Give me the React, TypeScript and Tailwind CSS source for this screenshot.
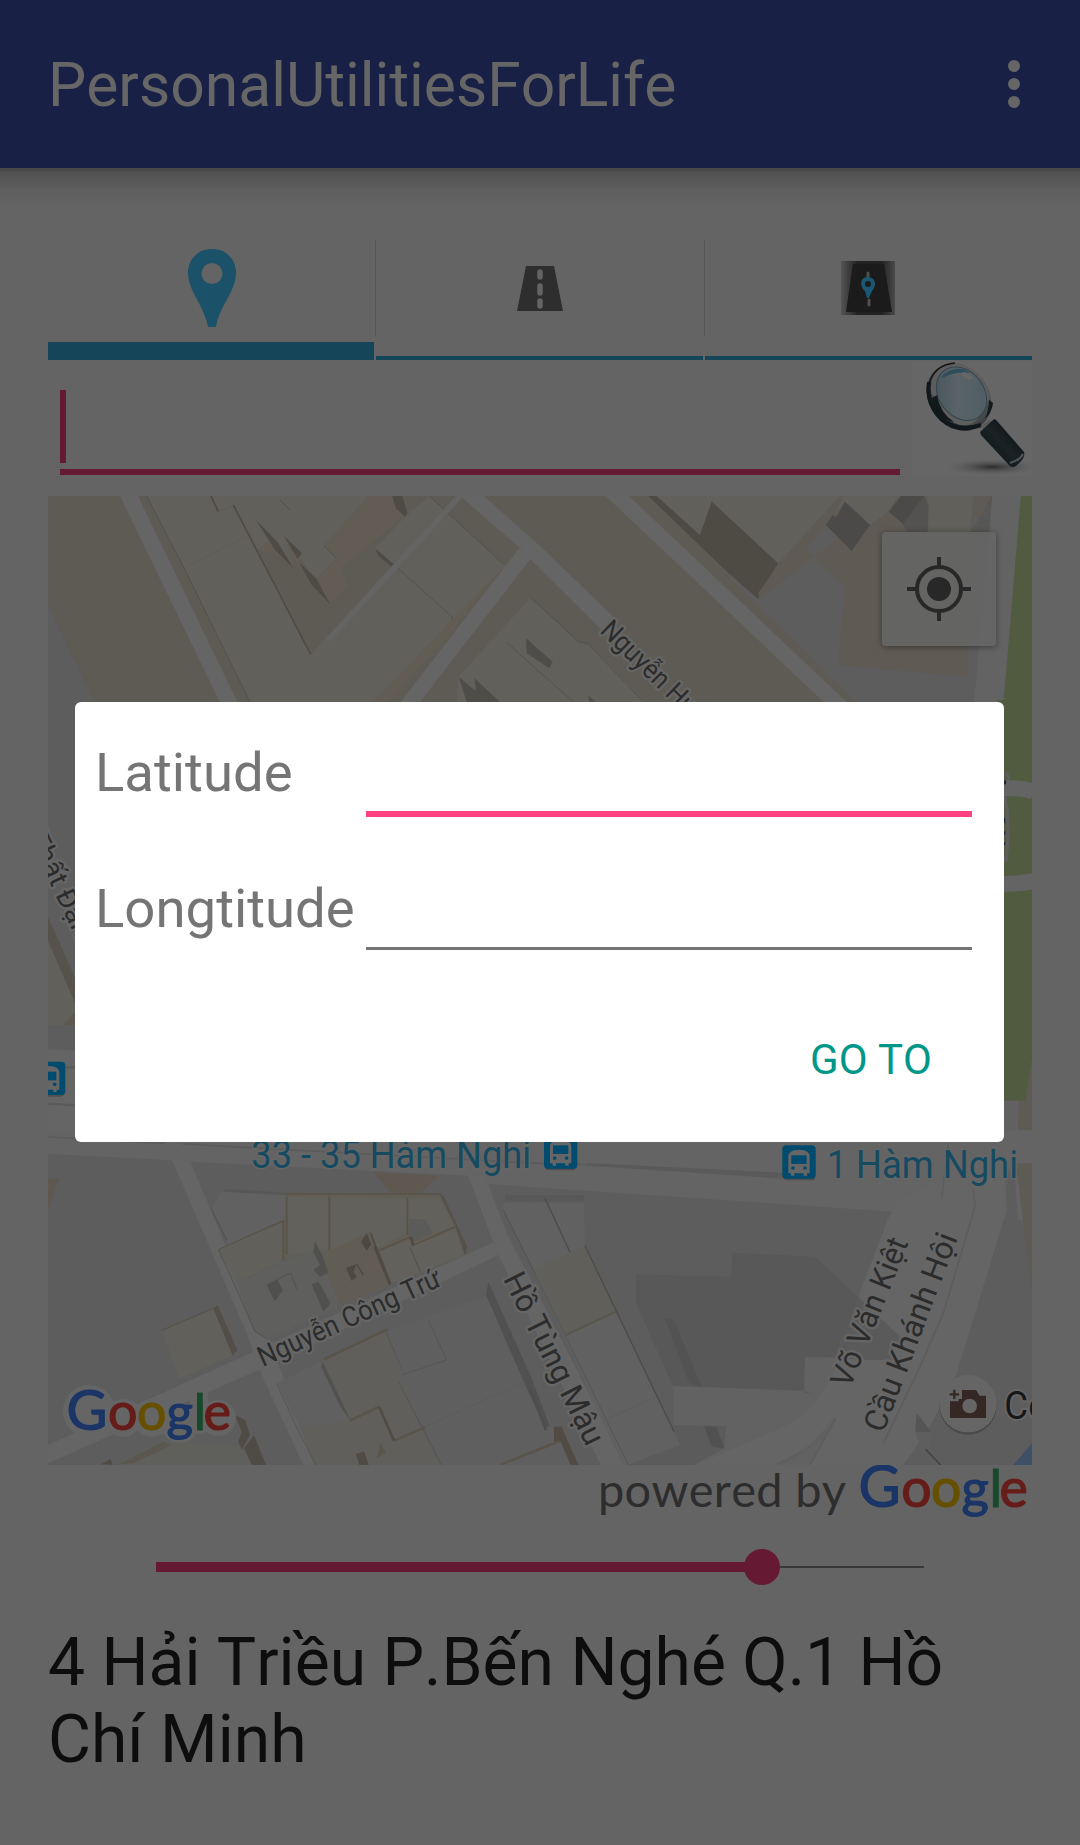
import React from "react";

const ROAD = "#656565";
const ROBOTO = "Roboto, sans-serif";

function Poly({ p, f }: { p: string; f: string }) {
  return <polygon points={p} fill={f} />;
}

function Label({ x, y, a, len, size, children, fill = "#2c2c2c" }: { x: number; y: number; a: number; len: number; size: number; children: string; fill?: string }) {
  return (
    <text transform={`translate(${x} ${y}) rotate(${a})`} fontFamily={ROBOTO} fontSize={size} textLength={len} lengthAdjust="spacingAndGlyphs" fill={fill} stroke="#666666" strokeWidth="14" strokeLinejoin="round" paintOrder="stroke">
      {children}
    </text>
  );
}

function Bus({ x, y }: { x: number; y: number }) {
  return (
    <g transform={`translate(${x} ${y})`}>
      <rect x="1" y="5" width="98" height="100" rx="14" fill="#505050" />
      <rect width="100" height="100" rx="12" fill="#004b6e" />
      <path d="M18 84V34Q18 13 50 13Q82 13 82 34V84H74V91H64V84H36V91H26V84Z" fill="#666" />
      <rect x="27" y="30" width="46" height="26" fill="#004b6e" />
      <circle cx="32" cy="68" r="5.5" fill="#004b6e" />
      <circle cx="68" cy="68" r="5.5" fill="#004b6e" />
    </g>
  );
}

function GoogleMark({ halo }: { halo?: boolean }) {
  const letters: [string, number, string, number][] = [
    ["G", -2.5, "#1a3566", 56],
    ["o", 39, "#661c18", 52],
    ["o", 68, "#665000", 52],
    ["g", 97.5, "#1a3566", 51],
    ["l", 125, "#17492a", 50],
    ["e", 134.5, "#661c18", 52],
  ];
  return (
    <svg width={halo ? 164 : 169} height={halo ? 58 : 59.8} viewBox="0 0 164 58" className="block overflow-visible" fontFamily="Lato, sans-serif">
      {halo && (
        <g fill="#656565">
          <circle cx="20" cy="22" r="26" />
          <circle cx="54" cy="29" r="19" />
          <circle cx="83" cy="29" r="19" />
          <circle cx="111" cy="35" r="19" />
          <rect x="121" y="-1" width="18" height="46" rx="7" />
          <circle cx="149" cy="29" r="18" />
        </g>
      )}
      <text y="41" strokeWidth="1.2">
        {letters.map(([c, x, color, size], i) => (
          <tspan key={i} x={x} fontSize={size} fill={color} stroke={color}>{c}</tspan>
        ))}
      </text>
    </svg>
  );
}

function CityMap() {
  return (
    <svg width="984" height="969" viewBox="48 496 984 969" className="block">
      <rect x="48" y="496" width="984" height="969" fill="#5d5d5d" />

      {/* north-west blocks */}
      <g transform="translate(40 490) scale(.33333)">
        <Poly p="24,18 3000,18 3000,660 175,660 24,345" f="#5e5b55" />
        <Poly p="320,18 1170,18 1390,222 1240,385 1000,635 630,635 430,230" f="#61605b" />
        <Poly p="985,18 1165,18 1390,222 925,635 1000,635 1400,225 1390,222 1160,18" f="#61605b" />
        <Poly p="985,18 1160,18 812,494 655,180 690,150 765,235 740,140 870,340 830,265 890,205 852,168" f="#5e5b55" />
        <Poly p="985,18 1058,18 1095,80 905,230 925,285 870,340 830,265 890,205 852,168" f="#625c54" />
        <Poly p="655,180 690,150 760,235 735,140 775,205 870,340 775,215" f="#625c54" />
        <Poly p="655,180 760,236 775,215 870,340 925,285 905,235 1095,80 1060,222 812,494" f="#5e5b55" />
        <Poly p="1160,18 1255,18 1215,60 865,450 812,494 1095,80" f="#5e5b55" />
        <Poly p="1095,80 1168,18 1390,222 1240,385 1000,635 660,635 812,494 1060,222 1005,176" f="#61605b" />
        <Poly p="648,90 712,155 762,236 705,180" f="#4e4b45" />
        <Poly p="732,138 786,190 772,206" f="#4e4b45" />
        <Poly p="777,216 828,265 870,342 815,285" f="#4e4b45" />
        <Poly p="1056,18 1087,18 1102,70 1095,80 1068,55" f="#4e4b45" />
        <Poly p="1005,174 1060,222 1054,230 1015,197" f="#4e4b45" />
        <Poly p="510,18 516,18 537,64 532,66" f="#514a42" />
        <path d="M580 45L812 493" stroke="#514a42" strokeWidth="5" />
        <path d="M320 18L430 230L630 635M1168 18L1390 222M1060 222L1235 380L1241 405M718 28L750 60M852 168L890 206" fill="none" stroke="#4c4b46" strokeWidth="2" />
        <path d="M440 230L620 138M535 66L580 45" stroke="#5c5a54" strokeWidth="2" />
        <path d="M1265 12L865 450" stroke="#646463" strokeWidth="17" />
        <Poly p="1390,232 1240,385 1000,635 1040,635 1220,445" f="#625c54" />
        <Poly p="240,18 294,18 592,635 650,755 605,755 539,635" f={ROAD} />
      </g>
      {/* north-east blocks */}
      <g transform="translate(540 490) scale(.33333)">
        <Poly p="1170,18 1262,18 1434,172 1400,225 1390,222" f="#5e5b55" />
        <Poly p="-245,420 -10,120 320,660 -320,660" f="#5e5b55" />
        <Poly p="-28,323 0,348 115,455 145,462 195,510 330,650 -250,650 -245,560" f="#61605b" />
        <path d="M-28 323L0 348L115 455L145 462L195 515L310 635M-100 457L0 547L100 635" fill="none" stroke="#4c4b46" strokeWidth="2" />
        <Poly p="-42,445 38,515 28,535 -40,490" f="#4e4d49" />
        <Poly p="-244,560 -185,610 -185,660 -220,635" f="#4e4d49" />
        <Poly p="-197,565 -110,645 -185,660" f="#4e4d49" />
        <Poly p="145,618 168,635 148,635" f="#4e4d49" />
        <Poly p="350,18 900,18 915,35 715,222 515,35 480,136" f="#61605b" />
        <Poly p="325,18 350,18 480,136 515,35 714,220 654,327 545,230" f="#4d4b44" />
        <Poly p="900,18 1445,18 1410,640 950,640 535,230 654,327 715,222" f="#5d5d5d" />
        <Poly p="900,18 1080,18 885,80 795,175 915,290 895,525 1280,560 1300,18 1355,18 1355,35 1325,75 1180,95 1160,18 1060,18 660,325 654,310 715,222" f="#5f5a53" />
        <Poly p="912,18 1075,18 1045,65 990,105 915,35 880,80" f="#61605b" />
        <Poly p="1165,18 1300,18 1290,130 1165,130" f="#61605b" />
        <Poly p="915,35 990,105 935,183 858,105 878,75 888,82" f="#4b4a48" />
        <Poly p="1083,18 1153,18 1090,103 1047,65" f="#4b4a48" />
        <Poly p="1153,18 1166,50 1162,130 1100,125 1088,103" f="#535250" />
        <Poly p="1355,20 1380,18 1345,130 1290,130" f="#575756" />
        <Poly p="1357,18 1443,18 1390,640 1302,640" f="#636363" />
        <Poly p="197,18 267,18 920,636 1100,806 1020,806 851,636" f={ROAD} />
        <Poly p="-240,18 -168,18 0,168 215,375 260,480 200,435 0,237 -60,175" f={ROAD} />
        <Poly p="-418,636 -62,174 -28,206 -360,636" f={ROAD} />
        <Poly p="1443,18 1476,18 1476,650 1390,650" f="#505b40" />
        <Label x={177} y={425} a={44} len={405} size={83}>Nguyễn Huệ</Label>
      </g>
      {/* west edge */}
      <g transform="translate(40 700) scale(.33333)">
        <Poly p="24,650 110,860 110,975 24,975" f="#61605b" />
        <Poly p="24,650 110,845 110,920 24,723" f="#57524b" />
        <Poly p="70,975 110,930 110,975" f="#5e584e" />
        <Poly p="24,1048 110,1052 3000,1090 3000,1500 24,1365" f={ROAD} />
        <path d="M24 1102H110M24 1211L110 1216M24 1312L375 1330" stroke="#5a5a5a" strokeWidth="7" />
        <Label x={-36} y={408} a={65} len={370} size={82}>Thất Đạm</Label>
        <Bus x={-24} y={1085} />
      </g>
      {/* park on the east edge */}
      <g transform="translate(900 700) scale(.33333)">
        <Poly p="290,0 396,0 396,1080 378,1202 290,1202" f="#505b40" />
        <path d="M300 264Q360 262 400 274M300 552Q360 552 400 543" fill="none" stroke="#646464" strokeWidth="48" />
        <path d="M315 220Q326 225 326 240M315 290Q332 380 317 485" fill="none" stroke="#5d5d5d" strokeWidth="10" />
        <circle cx="312" cy="247" r="7" fill="#202a2d" />
        <path d="M313 355V370M313 394V404M313 426V435" stroke="#202a2d" strokeWidth="5" />
        <Poly p="290,1202 356,1202 352,1350 290,1350" f="#616161" />
        <Poly p="378,1202 396,1080 396,1460 350,1460 356,1202" f="#5e5b55" />
      </g>
      {/* southern blocks */}
      <g transform="translate(40 1130) scale(.33333)">
        <Poly p="24,0 3000,0 3000,275 24,72" f="#646464" />
        <path d="M24 21L375 40M428 42L1500 100L1700 105L2300 145" fill="none" stroke="#5b5b5b" strokeWidth="5" />
        <Poly p="1640,99 2325,133 2325,152 1640,107" f="#5a5a5a" />
        <Poly p="24,72 398,91 640,620 640,660 24,945" f="#5d5d5d" />
        <Poly p="450,95 1285,137 1355,332 685,635" f="#5d5d5d" />
        <Poly p="395,88 450,92 600,450 705,680 845,1010 792,1010 665,735 620,610" f={ROAD} />
        <Poly p="24,945 640,665 1375,330 1375,375 700,700 24,1000" f={ROAD} />
        <Poly p="1283,135 1335,137 1400,310 1760,1010 1685,1010 1375,375" f={ROAD} />
        <Poly p="24,145 57,145 24,240" f="#5e5850" />
        <Poly p="998,126 1195,138 1138,192 1055,190" f="#5e5850" />
        <Poly p="545,183 740,190 740,380 590,460 560,330 515,238" f="#616161" />
        <path d="M550 181L740 192" stroke="#575757" strokeWidth="8" />
        <Poly p="740,188 1205,195 1245,285 1280,365 1145,428 865,525 830,350 724,395" f="#625e56" />
        <Poly p="740,201 864,201 864,360 740,375" f="#62615b" />
        <Poly p="873,201 1102,205 1102,310 1010,355 990,305 873,357" f="#62615b" />
        <Poly p="1105,205 1200,205 1242,290 1178,310 1155,268 1105,268" f="#62615b" />
        <Poly p="1110,268 1155,270 1178,310 1120,335 1105,310" f="#5b5b5a" />
        <Poly p="1200,195 1210,198 1282,350 1275,376 1245,285" f="#55504a" />
        <path d="M740 192H1205M740 200V375M868 200V360M1102 205V315M690 290L730 272V390M535 360L700 285M1112 350L1245 290M1015 362L1112 320" fill="none" stroke="#595347" strokeWidth="5" />
        <Poly p="535,360 690,292 724,292 724,395 590,458" f="#61605b" />
        <Poly p="590,460 830,350 900,525 865,545 680,625 640,600" f="#5f5f5d" />
        <Poly p="840,378 990,310 1050,465 900,526" f="#615d54" />
        <Poly p="1018,365 1108,330 1140,425 1055,460" f="#62615b" />
        <Poly p="1110,352 1245,296 1272,375 1145,425" f="#62615b" />
        <Poly p="680,465 712,447 728,482 704,514" f="#50504f" />
        <path d="M712 447L752 430L772 482" fill="none" stroke="#555" strokeWidth="4" />
        <Poly p="825,335 848,378 865,430 840,440 820,420 840,405 820,365" f="#50504f" />
        <Poly p="815,462 835,455 872,520 850,545" f="#50504f" />
        <Poly p="918,413 950,402 940,425 950,440 935,453" f="#4d4841" />
        <Poly p="963,335 980,310 994,342 980,363" f="#4d4841" />
        <path d="M950 402L970 435M992 308L1050 465" stroke="#4d4841" strokeWidth="4" />
        <path d="M1005 350L1050 462" stroke="#504a42" strokeWidth="10" />
        <path d="M1112 320L1120 345" stroke="#504a42" strokeWidth="9" />
        <path d="M515 238L560 330M535 360L582 460L645 605L680 625M1110 352L1140 425" fill="none" stroke="#484848" strokeWidth="2" />
        <Poly p="365,600 520,535 578,675 418,747" f="#61605b" />
        <Poly p="520,535 533,526 592,660 578,677" f="#534e48" />
        <path d="M365 601L520 535" stroke="#5a544b" strokeWidth="4" />
        <Poly p="710,760 850,690 930,875 780,892" f="#606060" />
        <Poly p="850,690 1040,600 1140,890 1205,1010 825,1010 780,892 930,872" f="#605f5b" />
        <Poly p="1040,605 1340,495 1470,750 1600,1010 1205,1010 1080,755" f="#5f5f5f" />
        <Poly p="1345,455 1475,745 1530,890 1515,890 1460,775 1338,495" f="#515151" />
        <Poly p="848,695 932,872 900,828 843,710" f="#515151" />
        <path d="M852 688L1042 598M930 872L1018 830M1062 932L1155 892M1380 1005L1540 940" stroke="#5a544a" strokeWidth="7" />
        <path d="M1018 832L1062 932" stroke="#514b43" strokeWidth="8" />
        <path d="M1165 570L1220 690L1085 735M1038 605L1087 720M1075 755L1205 1005M710 762L770 892L828 1005" fill="none" stroke="#505050" strokeWidth="2" />
        <path d="M1155 890L1455 755" stroke="#5a5a5a" strokeWidth="2" />
        <Poly p="947,972 972,965 988,1010 960,1010" f="#514b43" />
        <Poly p="1022,938 1037,970 1010,985" f="#5a544a" />
        <Poly p="240,1005 390,935 600,945 640,1010 240,1010" f="#5f5f5b" />
        <Poly p="240,1003 370,935 395,945 280,1000" f="#5c574e" />
        <Poly p="585,855 615,870 630,915 605,960 595,935 605,905" f="#504c45" />
        <Poly p="642,915 680,1010 638,1010 612,955" f="#504b45" />
        <Poly p="182,1003 212,988 218,1005" f="#504b45" />
        <text x="634" y="113" fontFamily={ROBOTO} fontSize="118" textLength="839" lengthAdjust="spacingAndGlyphs" fill="#164a60" stroke="#666" strokeWidth="9" paintOrder="stroke">33 - 35 Hàm Nghi</text>
      </g>
      <g transform="translate(530 1130) scale(.33333)">
        <Poly p="-80,218 162,220 165,345 260,545 450,945 340,1010 280,1010 120,660 0,400 -80,240" f="#616161" />
        <path d="M-75 205H162" stroke="#585858" strokeWidth="18" />
        <Poly p="15,415 165,348 258,545 107,615" f="#605f5a" />
        <path d="M45 205L120 367M165 347L260 545L432 905" fill="none" stroke="#4b4b4a" strokeWidth="4" />
        <path d="M-80 240L10 420L295 1005" fill="none" stroke="#4f4f4e" strokeWidth="2" />
        <path d="M107 615L258 545" stroke="#5b564c" strokeWidth="6" />
        <path d="M228 868L380 800" stroke="#5b5b5b" strokeWidth="2" />
        <Poly p="318,433 603,441 607,368 855,380 1110,620 1170,690 825,681 822,782 430,770 318,520" f="#585858" />
        <Poly p="403,562 432,570 515,770 478,760" f="#535353" />
        <Poly p="430,768 822,782 825,681 1170,690 1160,900 850,1010 495,1010 430,885" f="#626262" />
        <Poly p="430,885 588,888 583,955 500,1000 490,1010 280,1010 450,945" f="#5b5b5b" />
        <Poly p="522,888 560,892 583,955 545,950" f="#515151" />
        <path d="M1120 205Q1080 240 1065 290L985 500L900 740Q850 850 750 895L495 1005H735L840 945L910 865L1120 900L1310 500L1335 170L1240 150Z" fill={ROAD} />
        <Poly p="985,500 1110,620 1090,690 1020,690 825,681 822,790 868,790" f="#5a5a5a" />
        <Poly p="825,681 930,684 868,800 822,782" f="#626262" />
        <Poly p="1240,100 1425,100 1430,240 1280,740 1190,905 1120,1005 840,1010 920,865 1170,640 1320,300" f={ROAD} />
        <Poly p="1425,100 1455,140 1465,300 1506,520 1506,1010 1150,1010 1228,840 1280,730 1430,245" f="#5d5d5d" />
        <Poly p="1458,100 1506,100 1506,490" f="#5e5b55" />
        <path d="M1330 175L1335 230L1240 550L1170 710L1060 940M1235 205L1255 40M918 862L840 1005" fill="none" stroke="#5d5d5d" strokeWidth="5" />
        <path d="M735 1005Q840 965 890 900" fill="none" stroke="#5f5f5f" strokeWidth="4" />
        <Poly p="1160,850 1207,908 1155,905" f="#555" />
        <Poly p="1155,907 1207,907 1200,960 1172,980 1172,950" f="#5e5e5e" />
        <path d="M1187 958L1232 1005" stroke="#444" strokeWidth="5" />
        <Poly p="1450,1005 1506,940 1506,1005" f="#3f4f66" />
        <Poly p="72,890 95,890 145,1005 122,1005 92,935 72,935" f="#514b43" />
        <path d="M0 970L90 933" stroke="#5a544a" strokeWidth="7" />
        <path d="M0 775L48 900" stroke="#4e4e4e" strokeWidth="8" />
        <Bus x={42} y={16} />
        <Bus x={757} y={46} />
        <text x="890" y="143" fontFamily={ROBOTO} fontSize="119" textLength="574" lengthAdjust="spacingAndGlyphs" fill="#164a60" stroke="#666" strokeWidth="9" paintOrder="stroke">1 Hàm Nghi</text>
        <Label x={-82} y={446} a={63.5} len={566} size={94}>Hồ Tùng Mậu</Label>
        <Label x={960} y={778} a={-68.2} len={474} size={95}>Võ Văn Kiệt</Label>
        <Label x={1060} y={912} a={-69.2} len={630} size={95}>Cầu Khánh Hội</Label>
        <circle cx="1314" cy="828" r="86" fill="#4a4a4a" />
        <circle cx="1314" cy="821" r="86" fill="#656565" />
        <path fillRule="evenodd" d="M1260 864V814H1286V807H1296V780H1338L1349 797H1368V864ZM1319 806A22 22 0 1 0 1319 850A22 22 0 1 0 1319 806Z" fill="#342724" />
        <path d="M1273 779V807M1259 793H1287" stroke="#342724" strokeWidth="7" />
        <text x="1423" y="868" fontFamily={ROBOTO} fontSize="119" textLength="134" lengthAdjust="spacingAndGlyphs" fill="#171717" stroke="#666" strokeWidth="12" paintOrder="stroke">Co</text>
      </g>
      {/* street running south-west */}
      <g transform="translate(40 1130) scale(.33333)">
        <Label x={668} y={711} a={-24.4} len={594} size={84}>Nguyễn Công Trứ</Label>
      </g>
    </svg>
  );
}

function Magnifier() {
  return (
    <svg width="120" height="114" viewBox="0 0 120 114" className="block">
      <defs>
        <linearGradient id="lens" x1="0" y1="0" x2="1" y2="1">
          <stop offset="0" stopColor="#425359" />
          <stop offset=".45" stopColor="#5a6367" />
          <stop offset="1" stopColor="#4b5d64" />
        </linearGradient>
        <linearGradient id="rim" x1="1" y1=".3" x2="0" y2=".7">
          <stop offset="0" stopColor="#606060" />
          <stop offset=".5" stopColor="#4a4a4a" />
          <stop offset="1" stopColor="#0a1014" />
        </linearGradient>
        <linearGradient id="grip" x1="0" y1="1" x2="1" y2="0">
          <stop offset="0" stopColor="#080b0d" />
          <stop offset=".5" stopColor="#1a2226" />
          <stop offset="1" stopColor="#080b0d" />
        </linearGradient>
        <radialGradient id="shade">
          <stop offset="0" stopColor="#2c2c2c" />
          <stop offset="1" stopColor="#666" stopOpacity="0" />
        </radialGradient>
      </defs>
      <rect width="120" height="114" fill="#666" />
      <ellipse cx="80" cy="105" rx="50" ry="9" fill="url(#shade)" />
      <g transform="rotate(-38 47 35)">
        <ellipse cx="47" cy="35" rx="30" ry="36" fill="url(#rim)" />
        <ellipse cx="49" cy="34" rx="26.500" ry="33" fill="#5e5e5e" />
        <ellipse cx="51" cy="34" rx="22.500" ry="29" fill="url(#lens)" stroke="#33464e" strokeWidth="1" />
      </g>
      <path d="M22 34Q28 60 51 64Q68 63 77 37L81 41Q76 66 56 66Q23 66 19 31Z" fill="#3e4346" opacity=".8" />
      <path d="M20 36L25 33Q28 51 42 60Q24 57 20 36M77 38L81 41Q80 50 73 57Q77 48 77 38" fill="#12191d" />
      <path d="M17 20Q13 43 34 60Q50 70 69 63" fill="none" stroke="#10181c" strokeWidth="4" />
      <path d="M17 22Q22 3 43 1" fill="none" stroke="#151515" strokeWidth="1.5" />
      <path d="M30 14Q45 1 58 11Q44 9 30 16Z" fill="#2d4d5a" />
      <ellipse cx="55" cy="14" rx="6" ry="3" transform="rotate(25 55 14)" fill="#666" />
      <path d="M69 64L78 58L81 62L73 70Z" fill="#5a5a5a" />
      <path d="M68 70L81 58Q83 56 85 59L112 90Q114 96 104 104Q99 107 96 102L69 73Z" fill="url(#grip)" />
      <path d="M98 101Q108 98 111 92" fill="none" stroke="#50575b" strokeWidth="2" />
    </svg>
  );
}

export default function App() {
  return (
    <div className="relative h-[1845px] w-[1080px] overflow-hidden bg-[#646464] font-[Roboto,sans-serif] [font-kerning:none]">
      <header className="flex h-[168px] items-center justify-between bg-[#192046] pl-12 pr-[60px]">
        <h1 className="pt-1 text-[60.6px] leading-[70px] font-normal whitespace-nowrap text-[#666666]">PersonalUtilitiesForLife</h1>
        <div className="flex flex-col gap-1.5">
          <i className="size-3 rounded-full bg-[#666666]" />
          <i className="size-3 rounded-full bg-[#666666]" />
          <i className="size-3 rounded-full bg-[#666666]" />
        </div>
      </header>
      <div className="h-10 border-t-[3px] border-[#484848] bg-linear-to-b from-[#505050] via-[#5e5e5e] via-50% to-[#646464]" />

      <main className="px-12 pt-8">
        <nav className="grid h-[120px] grid-cols-[326px_327px_327px] gap-0.5">
          <div className="flex items-start justify-center border-b-[18px] border-[#144559] pt-[9px] pl-0.5">
            <svg width="50" height="78" viewBox="0 0 50 78">
              <path fillRule="evenodd" d="M25 0C11 0 1 10 1 24C1 42 18 58 21 78H29C32 58 49 42 49 24C49 10 39 0 25 0ZM25 14A10.500 10.500 0 1 1 25 35A10.500 10.500 0 1 1 25 14Z" fill="#1b5169" />
            </svg>
          </div>
          <div className="relative flex items-start justify-center border-b-4 border-[#144559] pt-6">
            <i className="absolute top-0 -left-px h-24 w-px bg-[#555555]" />
            <svg width="46" height="48" viewBox="0 0 46 48">
              <path d="M9 2H37L46 47H0Z" fill="#2e2e2e" />
              <path d="M23 8V13M23 22V29M23 37V42" stroke="#646464" strokeWidth="5.500" strokeLinecap="round" />
            </svg>
          </div>
          <div className="relative flex items-start justify-center border-b-4 border-[#144559] pt-[21px] pr-[2px]">
            <i className="absolute top-0 -left-px h-24 w-px bg-[#555555]" />
            <svg width="54" height="54" viewBox="0 0 54 54">
              <defs>
                <linearGradient id="tile">
                  <stop offset="0" stopColor="#555" />
                  <stop offset=".3" stopColor="#222" />
                  <stop offset=".75" stopColor="#222" />
                  <stop offset="1" stopColor="#4a4a4a" />
                </linearGradient>
              </defs>
              <rect width="54" height="54" fill="url(#tile)" />
              <path d="M12 3H43L51 51H5Z" fill="#1b1b1b" />
              <path d="M27 12V16M28 39V44" stroke="#505050" strokeWidth="3" strokeLinecap="round" />
              <path d="M27 16C18 16 19 26 24 30L26 37H28L31 30C36 25 35 16 27 16ZM27 20A3 3 0 1 1 27 26A3 3 0 1 1 27 20Z" fillRule="evenodd" fill="#1b5672" />
            </svg>
          </div>
        </nav>

        <div className="flex h-[136px] items-start justify-between pt-0.5 pl-3">
          <div className="mt-7 flex h-[85px] w-[840px] items-start border-b-[6px] border-[#651933]">
            <i className="h-[73px] w-1.5 bg-[#651933]" />
          </div>
          <Magnifier />
        </div>

        <section className="relative h-[969px] w-[984px]">
          <CityMap />
          <div className="absolute top-[36px] left-[834px] flex size-[114px] items-center justify-center rounded bg-[#656565]/90 shadow-[0_1px_6px_rgba(0,0,0,0.4)]">
            <svg width="64" height="64" viewBox="0 0 64 64" fill="none" stroke="#282828" strokeWidth="4">
              <circle cx="32" cy="32" r="22" />
              <circle cx="32" cy="32" r="12" fill="#282828" stroke="none" />
              <path d="M32 0V10M32 54V64M0 32H10M54 32H64" />
            </svg>
          </div>
          <div className="absolute top-[893px] left-[21px]"><GoogleMark halo /></div>
        </section>

        <div className="flex h-[61px] items-start justify-end gap-3 pr-0.5">
          <svg width="250" height="61" className="block overflow-visible" fontFamily="Lato, sans-serif">
            <text x="-1" y="42" fontSize="47" textLength="248" fill="#2d2d2d">powered by</text>
          </svg>
          <GoogleMark />
        </div>

        <div className="relative mx-[108px] mt-[23px] flex h-9 items-center">
          <div className="h-2.5 w-[606px] bg-[#651933]" />
          <div className="h-0.5 flex-1 bg-[#383838]" />
          <i className="absolute left-[588px] size-9 rounded-full bg-[#651933]" />
        </div>

        <p className="mt-[39px] text-[66px] leading-[77px] text-[#0d0d0d]">4 Hải Triều P.Bến Nghé Q.1 Hồ<br />Chí Minh</p>
      </main>

      <div role="dialog" className="absolute top-[702px] left-[75px] flex h-[440px] w-[929px] flex-col rounded-md bg-white pr-8 pl-5">
        <div className="flex h-[136px] items-start justify-between">
          <label className="pt-[38px] text-[54.5px] leading-[64px] text-[#757575]">Latitude</label>
          <div className="h-[115px] w-[606px] border-b-[6px] border-[#ff4081]" />
        </div>
        <div className="flex h-[136px] items-start justify-between">
          <label className="pt-[38px] text-[54.5px] leading-[64px] text-[#757575]">Longtitude</label>
          <div className="h-[112px] w-[606px] border-b-[3px] border-[#757575]" />
        </div>
        <button className="mt-[58px] mr-10 self-end text-[42px] leading-[56px] text-[#009688]">GO TO</button>
      </div>
    </div>
  );
}
